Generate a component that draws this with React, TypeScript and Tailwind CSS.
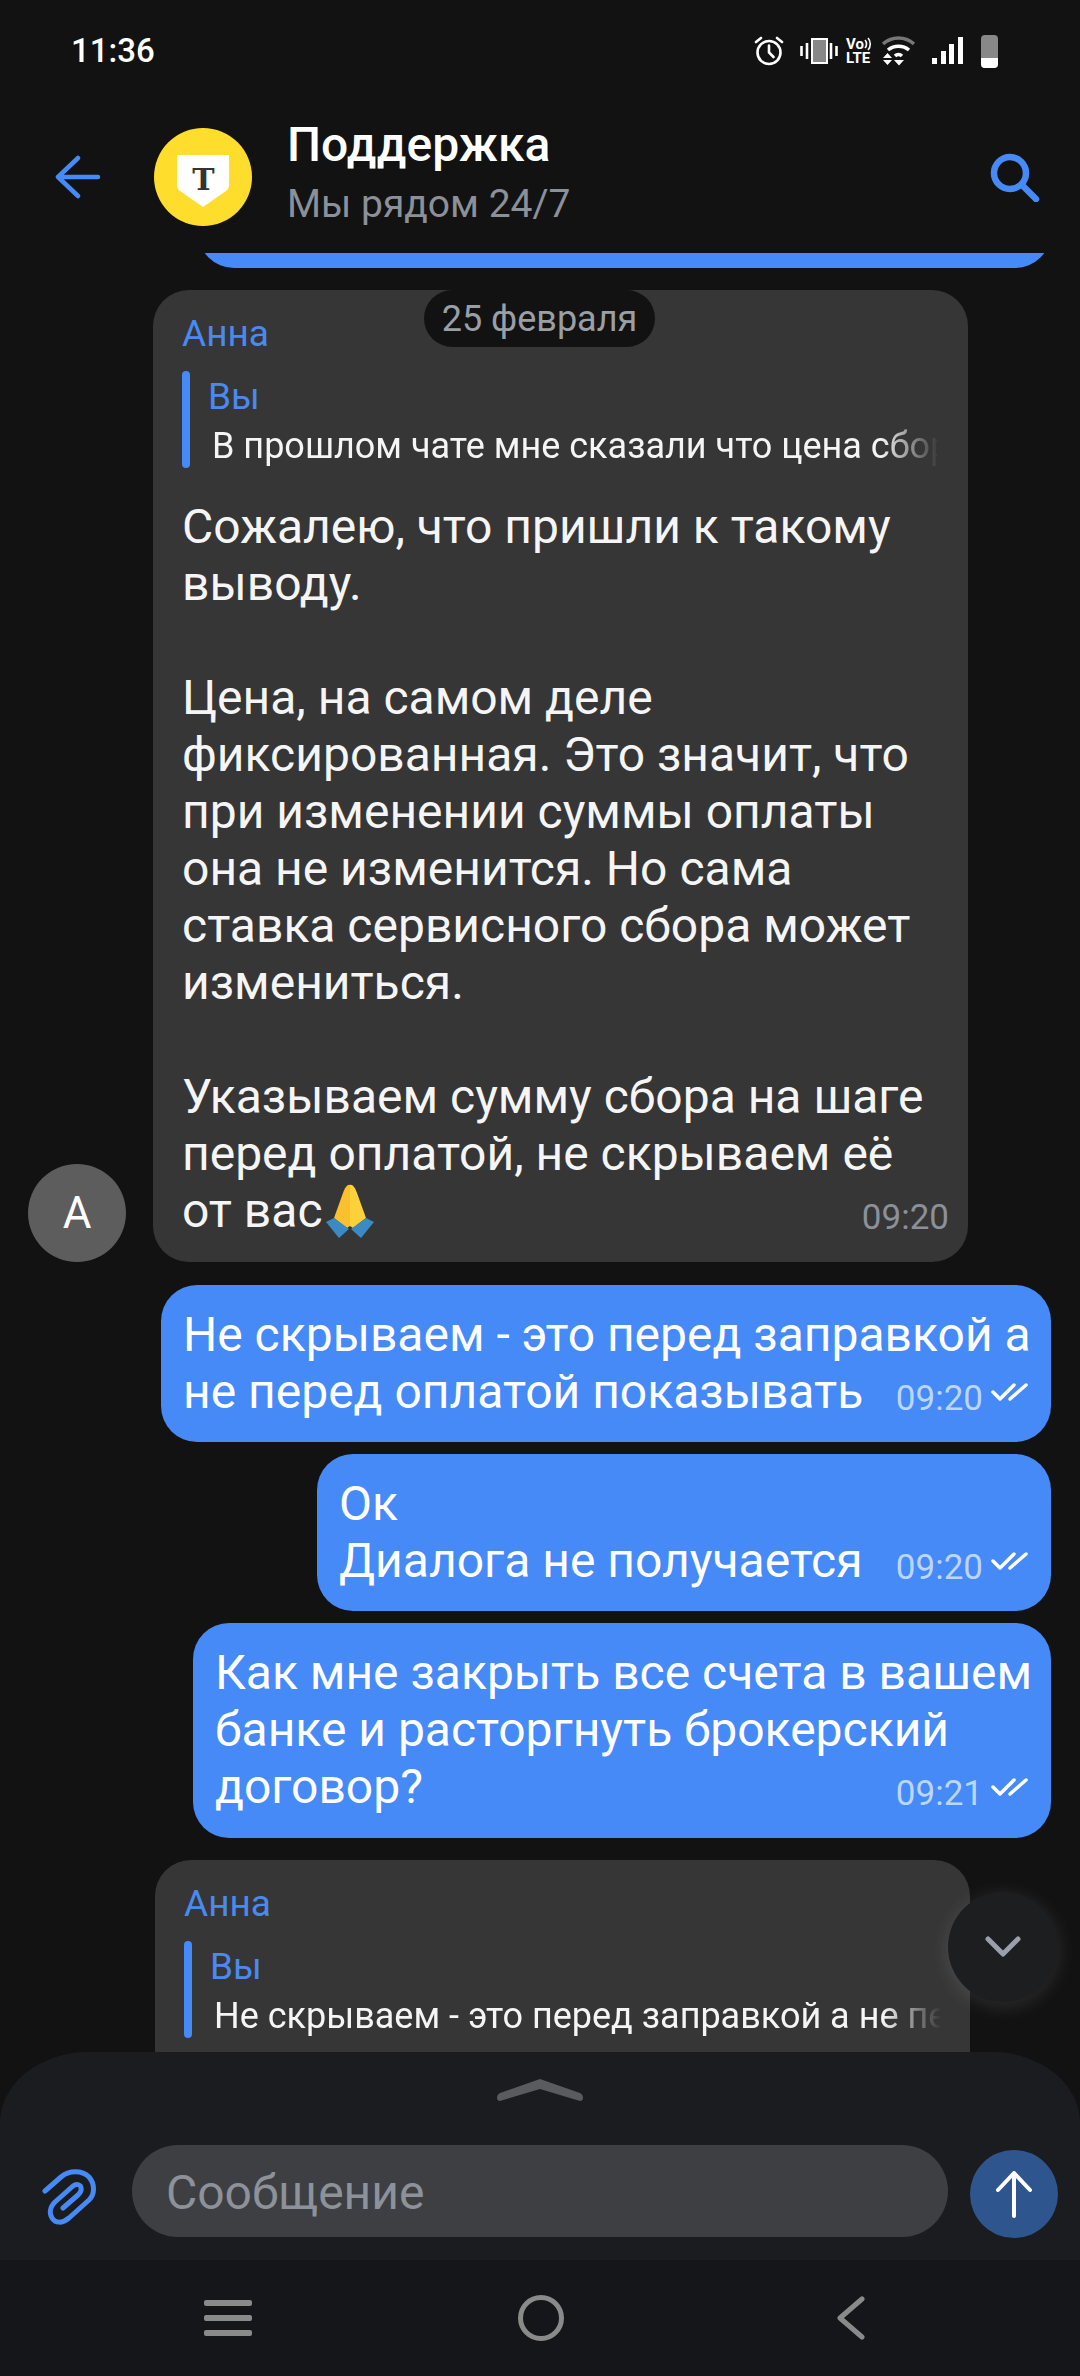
import React from 'react';

const font = { fontFamily: 'Roboto, "Noto Sans", sans-serif' };

const BackArrow = () => (
  <svg width="46" height="44" viewBox="0 0 46 44" fill="none" stroke="#458af7" strokeWidth="4.5" strokeLinecap="round" strokeLinejoin="round">
    <path d="M3 22h40M23 3 3 22l20 19" />
  </svg>
);

const SearchIcon = () => (
  <svg width="50" height="50" viewBox="0 0 50 50" fill="none" stroke="#458af7" strokeWidth="6.5" strokeLinecap="round">
    <circle cx="20" cy="21" r="16" />
    <path d="M32 33l14 14" />
  </svg>
);

const Logo = () => (
  <svg width="98" height="98" viewBox="0 0 98 98">
    <circle cx="49" cy="49" r="49" fill="#ffdd2d" />
    <path d="M23 27h52v30c0 3-1 4-3 6L49 79 26 63c-2-2-3-3-3-6z" fill="#fff" />
    <text x="49.5" y="62" textAnchor="middle" fontSize="30" fontWeight="700" fontFamily="'DejaVu Serif', serif" fill="#333">T</text>
  </svg>
);

const StatusIcons = () => (
  <div className="flex items-center text-white">
    <svg width="30" height="30" viewBox="0 0 30 30" fill="none" stroke="#fff" strokeWidth="2.6" strokeLinecap="round">
      <circle cx="15" cy="16.5" r="11.5" />
      <path d="M15 9.5v7l4.5 4.5M2 6l5-4M28 6l-5-4" />
    </svg>
    <svg className="ml-[16px]" width="38" height="28" viewBox="0 0 38 28" fill="none">
      <rect x="12" y="2" width="15" height="24" fill="#888" stroke="#fff" strokeWidth="2" />
      <path d="M7 6v16M31 6v16" stroke="#fff" strokeWidth="2.6" />
      <path d="M1.500 9v10M36.500 9v10" stroke="#fff" strokeWidth="2.6" />
    </svg>
    <div className="ml-[8px] flex w-[28px] flex-col items-start text-[15px] font-bold leading-[14px]">
      <span className="flex items-center">
        Vo
        <svg width="8" height="14" viewBox="0 0 8 14" fill="none" stroke="#fff" strokeWidth="1.600">
          <path d="M1 3c2 2 2 6 0 8M4 1c3 3 3 9 0 12" />
        </svg>
      </span>
      <span>LTE</span>
    </div>
    <svg className="ml-[8px]" width="33" height="30" viewBox="0 0 33 30" fill="none">
      <path d="M1 8C10 0 23 0 32 8" stroke="#777" strokeWidth="3.5" />
      <path d="M6 14c6-5 15-5 21 0" stroke="#fff" strokeWidth="3.500" />
      <path d="M13 20c2-2 5-2 7 0" stroke="#fff" strokeWidth="3.500" />
      <path d="M1 22h9l-4.500-5zM1 24h9l-4.500 5zM12 24h10l-5 5.500z" fill="#fff" />
    </svg>
    <svg className="ml-[17px]" width="31" height="28" viewBox="0 0 31 28" fill="#fff">
      <rect x="0" y="21" width="5" height="6" />
      <rect x="9" y="14" width="5" height="13" />
      <rect x="17" y="7" width="5" height="20" />
      <rect x="26" y="0" width="5" height="27" />
    </svg>
    <div className="ml-[18px] flex h-[33px] w-[17px] flex-col overflow-hidden rounded-[4px] bg-[#888]">
      <div className="flex-1" />
      <div className="h-[10px] bg-white" />
    </div>
  </div>
);

const Ticks = () => (
  <svg className="ml-[8px] mb-[18px] -mr-[2px]" width="38" height="20" viewBox="0 0 38 20" fill="none" stroke="#fff" strokeWidth="3.5" strokeLinecap="round" strokeLinejoin="round">
    <path d="M2 10l7 7L23 3M19 17L35 3" />
  </svg>
);

const PrayEmoji = () => (
  <svg className="ml-[3px]" width="48" height="54" viewBox="0 0 48 54">
    <path d="M24 1c-3-1-5 3-7 8L8 34l13 10 3-2z" fill="#fbc02d" />
    <path d="M24 1c3-1 5 3 7 8l9 25-13 10-3-2z" fill="#fdd13a" />
    <path d="M8 34 0 38l13 16 10-9z" fill="#3a8bc4" />
    <path d="M40 34l8 4-13 16-10-9z" fill="#3a8bc4" />
  </svg>
);

const Reply = ({ text }: { text: string }) => (
  <div className="mt-[17px] flex h-[97px] gap-[18px]">
    <div className="w-[8px] rounded-full bg-[#458af7]" />
    <div className="min-w-0 flex-1 pt-[3px]">
      <div className="text-[37px] leading-[46px] text-[#4a8af0]">Вы</div>
      <div className="mt-[3px] w-[731px] overflow-hidden whitespace-nowrap pl-[4px] text-[36px] leading-[46px] text-[#f5f5f5] [mask-image:linear-gradient(to_right,black_92%,transparent)]">
        {text}
      </div>
    </div>
  </div>
);

const OutBubble = ({ lines, last, time, width, pl, pb }: { lines: string[]; last: string; time: string; width: string; pl: string; pb: string }) => (
  <div className={`self-end whitespace-nowrap rounded-[36px] bg-[#458af7] pr-[24px] pt-[21px] text-[48px] leading-[57px] text-white ${width} ${pl} ${pb}`}>
    {lines.map((l) => (
      <div key={l}>{l}</div>
    ))}
    <div className="flex items-end justify-between">
      <span>{last}</span>
      <span className="flex items-end">
        <span className="text-[35px] leading-[42px] text-[#bcd6fd]">{time}</span>
        <Ticks />
      </span>
    </div>
  </div>
);

export default function App() {
  return (
    <div className="relative flex h-[2376px] w-[1080px] flex-col overflow-hidden bg-[#121212]" style={font}>
      {/* status bar */}
      <div className="flex h-[100px] items-center justify-between pl-[71px] pr-[82px] pt-[2px]">
        <span className="text-[33px] font-medium text-white">11:36</span>
        <StatusIcons />
      </div>

      {/* header */}
      <div className="flex h-[153px] items-center pl-[55px] pr-[40px]">
        <BackArrow />
        <div className="ml-[53px]">
          <Logo />
        </div>
        <div className="ml-[35px] flex-1 pb-[8px]">
          <div className="text-[48px] font-medium leading-[52px] text-white">Поддержка</div>
          <div className="mt-[11px] text-[39px] leading-[44px] text-[#8b9099]">Мы рядом 24/7</div>
        </div>
        <SearchIcon />
      </div>

      {/* messages */}
      <div className="relative flex flex-1 flex-col overflow-hidden">
        <div className="ml-[198px] -mt-[85px] h-[100px] w-[853px] shrink-0 rounded-[36px] bg-[#458af7]" />

        <div className="mt-[22px] flex shrink-0 items-end gap-[27px] pl-[28px]">
          <div className="flex h-[98px] w-[98px] shrink-0 items-center justify-center rounded-full bg-[#5d5d5d] text-[44px] text-white">А</div>
          <div className="w-[815px] rounded-[36px] bg-[#363636] pb-[23px] pl-[29px] pr-[19px] pt-[24px] text-[48px] leading-[57px] text-[#f5f5f5]">
            <div className="text-[37px] leading-[40px] text-[#4a8af0]">Анна</div>
            <Reply text="В прошлом чате мне сказали что цена сбор" />
            <div className="mt-[30px]">
              <div>Сожалею, что пришли к такому</div>
              <div>выводу.</div>
              <div className="mt-[57px]">Цена, на самом деле</div>
              <div>фиксированная. Это значит, что</div>
              <div>при изменении суммы оплаты</div>
              <div>она не изменится. Но сама</div>
              <div>ставка сервисного сбора может</div>
              <div>измениться.</div>
              <div className="mt-[57px]">Указываем сумму сбора на шаге</div>
              <div>перед оплатой, не скрываем её</div>
              <div className="flex h-[57px] items-end justify-between">
                <span className="flex items-center">
                  от вас
                  <PrayEmoji />
                </span>
                <span className="text-[35px] leading-[42px] text-[#8b9099]">09:20</span>
              </div>
            </div>
          </div>
        </div>

        <div className="mt-[23px] flex shrink-0 flex-col gap-[12px] pr-[29px]">
          <OutBubble width="w-[890px]" pl="pl-[22px]" pb="pb-[22px]" lines={['Не скрываем - это перед заправкой а']} last="не перед оплатой показывать" time="09:20" />
          <OutBubble width="w-[734px]" pl="pl-[22px]" pb="pb-[22px]" lines={['Ок']} last="Диалога не получается" time="09:20" />
          <OutBubble width="w-[858px]" pl="pl-[22px]" pb="pb-[23px]" lines={['Как мне закрыть все счета в вашем', 'банке и расторгнуть брокерский']} last="договор?" time="09:21" />
        </div>

        <div className="ml-[155px] mt-[22px] w-[815px] shrink-0 rounded-t-[36px] bg-[#363636] px-[29px] pb-[22px] pt-[24px]">
          <div className="text-[37px] leading-[40px] text-[#4a8af0]">Анна</div>
          <Reply text="Не скрываем - это перед заправкой а не перед оплатой" />
        </div>

        {/* date pill */}
        <div className="absolute left-[424px] top-[37px] flex h-[57px] w-[231px] items-center justify-center rounded-full bg-[#121212] text-[36px] text-[#9a9fa6]">
          25 февраля
        </div>

        {/* scroll down */}
        <div className="absolute bottom-[50px] left-[948px] flex h-[110px] w-[110px] items-center justify-center rounded-full bg-[#1d1e20] shadow-[0_4px_20px_rgba(255,255,255,0.12)]">
          <svg width="36" height="24" viewBox="0 0 36 24" fill="none" stroke="#9aa0ab" strokeWidth="5" strokeLinecap="round" strokeLinejoin="round">
            <path d="M3 4l15 15L33 4" />
          </svg>
        </div>
      </div>

      {/* composer */}
      <div className="flex h-[71px] shrink-0 items-start justify-center rounded-t-[88px_71px] bg-[#1b1c1f] pt-[27px]">
        <svg width="88" height="22" viewBox="0 0 88 22" fill="#5a5b5e">
          <path d="M44 0 84 14c4 2 4 8 0 8l-40-12L4 22c-4 0-4-6 0-8z" />
        </svg>
      </div>
      <div className="flex h-[137px] shrink-0 items-start bg-[#1b1c1f] pl-[42px] pr-[22px] pt-[22px]">
        <svg className="mt-[22px]" width="56" height="60" viewBox="0 0 56 60" fill="none" stroke="#458af7" strokeWidth="5" strokeLinecap="round" strokeLinejoin="round">
          <path d="M3 24 19 10c8-7 21-7 28 0 6 7 6 17 0 23L27 51c-7 6-14 5-17 0-3-5-2-11 3-16l18-16c4-3 8-1 8 2 1 3-1 5-3 7L21 41" />
        </svg>
        <div className="ml-[34px] flex h-[92px] w-[816px] items-center rounded-full bg-[#3e3f42] pl-[34px] pt-[4px] text-[48px] text-[#8d9199]">
          Сообщение
        </div>
        <div className="ml-[22px] mt-[5px] flex h-[88px] w-[88px] items-center justify-center rounded-full bg-[#2f558f]">
          <svg width="38" height="48" viewBox="0 0 38 48" fill="none" stroke="#fff" strokeWidth="4" strokeLinecap="round" strokeLinejoin="round">
            <path d="M19 46V3M3 20 19 3l16 17" />
          </svg>
        </div>
      </div>

      {/* nav bar */}
      <div className="flex h-[116px] shrink-0 items-center bg-[#14161a] pl-[204px]">
        <div className="flex w-[48px] flex-col gap-[9px]">
          <div className="h-[6px] rounded-[2px] bg-[#8a8a8a]" />
          <div className="h-[6px] rounded-[2px] bg-[#8a8a8a]" />
          <div className="h-[6px] rounded-[2px] bg-[#8a8a8a]" />
        </div>
        <div className="ml-[266px] h-[46px] w-[46px] rounded-full border-[5px] border-[#8a8a8a]" />
        <svg className="ml-[272px]" width="30" height="44" viewBox="0 0 30 44" fill="none" stroke="#8a8a8a" strokeWidth="5" strokeLinecap="round" strokeLinejoin="round">
          <path d="M26 3 4 22l22 19" />
        </svg>
      </div>
    </div>
  );
}
